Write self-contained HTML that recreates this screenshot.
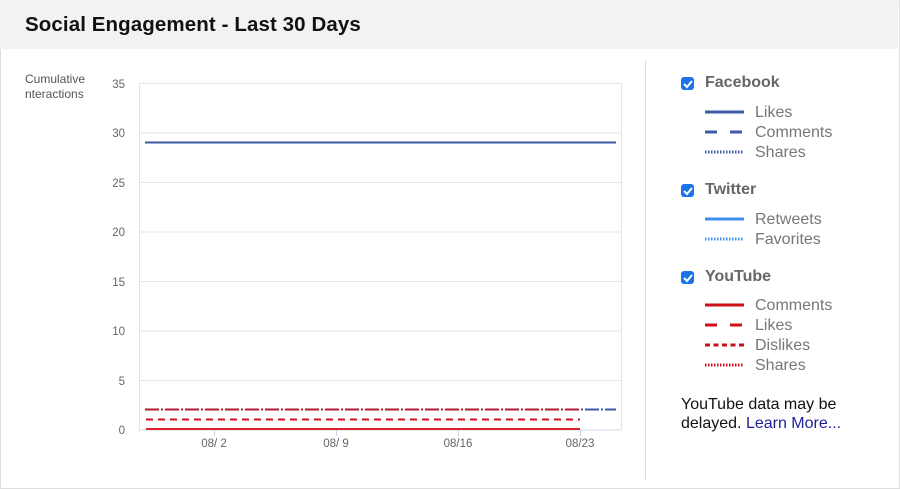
<!DOCTYPE html>
<html><head><style>
body{margin:0;width:900px;height:489px;overflow:hidden;background:#fff;font-family:"Liberation Sans",sans-serif;}
.card{position:absolute;left:0;top:0;width:898px;height:487px;border:1px solid #ddd;}
.hdr{position:absolute;left:0;top:0;width:898px;height:49px;background:#f2f2f2;}
.hdr h1{margin:0;position:absolute;left:25px;top:13px;font-size:20.5px;font-weight:bold;color:#111;letter-spacing:0.1px;}
.t{position:absolute;font-size:16px;color:#777;white-space:nowrap;}
.b{font-weight:bold;color:#666;}
.cb{position:absolute;width:13px;height:13px;background:#1a73e8;border-radius:3px;z-index:0}
svg{z-index:1}
</style></head><body>
<div class="card"></div>
<div class="hdr"><h1>Social Engagement - Last 30 Days</h1></div>
<div style="position:absolute;left:645px;top:60px;width:1px;height:420px;background:#ddd"></div>
<div class="cb" style="left:681px;top:77px"></div>
<div class="cb" style="left:681px;top:184px"></div>
<div class="cb" style="left:681px;top:271px"></div>
<svg width="900" height="489" style="position:absolute;left:0;top:0">
<g font-family="Liberation Sans" font-size="12" fill="#555">
<text x="25" y="83">Cumulative</text><text x="25" y="98">nteractions</text>
</g>
<g stroke="#e4e4e4" stroke-width="1">
<line x1="139" y1="83.5" x2="621" y2="83.5"/><line x1="139" y1="133" x2="621" y2="133"/>
<line x1="139" y1="182.5" x2="621" y2="182.5"/><line x1="139" y1="232" x2="621" y2="232"/>
<line x1="139" y1="281.5" x2="621" y2="281.5"/><line x1="139" y1="331" x2="621" y2="331"/>
<line x1="139" y1="380.5" x2="621" y2="380.5"/>
<line x1="139.5" y1="83" x2="139.5" y2="430"/><line x1="621.5" y1="83" x2="621.5" y2="430"/>
</g>
<line x1="139" y1="430" x2="621" y2="430" stroke="#d0d8ea"/>
<g stroke="#c8d2ea"><line x1="214.5" y1="430" x2="214.5" y2="436"/><line x1="336.5" y1="430" x2="336.5" y2="436"/><line x1="458.5" y1="430" x2="458.5" y2="436"/><line x1="580.5" y1="430" x2="580.5" y2="436"/></g>
<g font-family="Liberation Sans" font-size="11.5" fill="#666" text-anchor="end">
<text x="125" y="88">35</text><text x="125" y="137">30</text><text x="125" y="187">25</text><text x="125" y="236">20</text><text x="125" y="286">15</text><text x="125" y="335">10</text><text x="125" y="385">5</text><text x="125" y="434">0</text>
</g>
<g font-family="Liberation Sans" font-size="11.5" fill="#666" text-anchor="middle">
<text x="214" y="447">08/ 2</text><text x="336" y="447">08/ 9</text><text x="458" y="447">08/16</text><text x="580" y="447">08/23</text>
</g>
<line x1="145" y1="142.5" x2="616" y2="142.5" stroke="#3b5ba5" stroke-width="2"/>
<line x1="145" y1="409.5" x2="616" y2="409.5" stroke="#3b5ba5" stroke-width="2" stroke-dasharray="14 2 2 2"/>
<line x1="145" y1="409.5" x2="580" y2="409.5" stroke="#cc0f1a" stroke-width="2" stroke-dasharray="14 2 2 2" opacity="0.85"/>
<line x1="146" y1="419.5" x2="580" y2="419.5" stroke="#d0101c" stroke-width="2" stroke-dasharray="7 5"/>
<line x1="146" y1="429" x2="580" y2="429" stroke="#e0202c" stroke-width="2"/>
<g stroke-width="3">
<line x1="705" y1="112" x2="744" y2="112" stroke="#3b5ba5"/>
<line x1="705" y1="132" x2="744" y2="132" stroke="#3b5ba5" stroke-dasharray="12 13"/>
<line x1="705" y1="152" x2="744" y2="152" stroke="#3b5ba5" stroke-dasharray="1.5 1.5"/>
<line x1="705" y1="219" x2="744" y2="219" stroke="#3d8ff0"/>
<line x1="705" y1="239" x2="744" y2="239" stroke="#3d8ff0" stroke-dasharray="1.5 1.5"/>
<line x1="705" y1="305" x2="744" y2="305" stroke="#cc0f1a"/>
<line x1="705" y1="325" x2="744" y2="325" stroke="#cc0f1a" stroke-dasharray="12 13"/>
<line x1="705" y1="345" x2="744" y2="345" stroke="#cc0f1a" stroke-dasharray="5 3.5"/>
<line x1="705" y1="365" x2="744" y2="365" stroke="#cc0f1a" stroke-dasharray="1.5 1.5"/>
</g>
<g fill="none" stroke="#fff" stroke-width="2"><path d="M684 84 l3 3 l5 -6"/><path d="M684 191 l3 3 l5 -6"/><path d="M684 278 l3 3 l5 -6"/></g>
</svg>
<div class="t b" style="left:705px;top:74px">Facebook</div>
<div class="t" style="left:755px;top:104px">Likes</div>
<div class="t" style="left:755px;top:124px">Comments</div>
<div class="t" style="left:755px;top:144px">Shares</div>
<div class="t b" style="left:705px;top:181px">Twitter</div>
<div class="t" style="left:755px;top:211px">Retweets</div>
<div class="t" style="left:755px;top:231px">Favorites</div>
<div class="t b" style="left:705px;top:268px">YouTube</div>
<div class="t" style="left:755px;top:297px">Comments</div>
<div class="t" style="left:755px;top:317px">Likes</div>
<div class="t" style="left:755px;top:337px">Dislikes</div>
<div class="t" style="left:755px;top:357px">Shares</div>
<div class="t" style="left:681px;top:396px;color:#111">YouTube data may be</div>
<div class="t" style="left:681px;top:415px;color:#111">delayed. <span style="color:#1f1f99">Learn More...</span></div>
</body></html>
